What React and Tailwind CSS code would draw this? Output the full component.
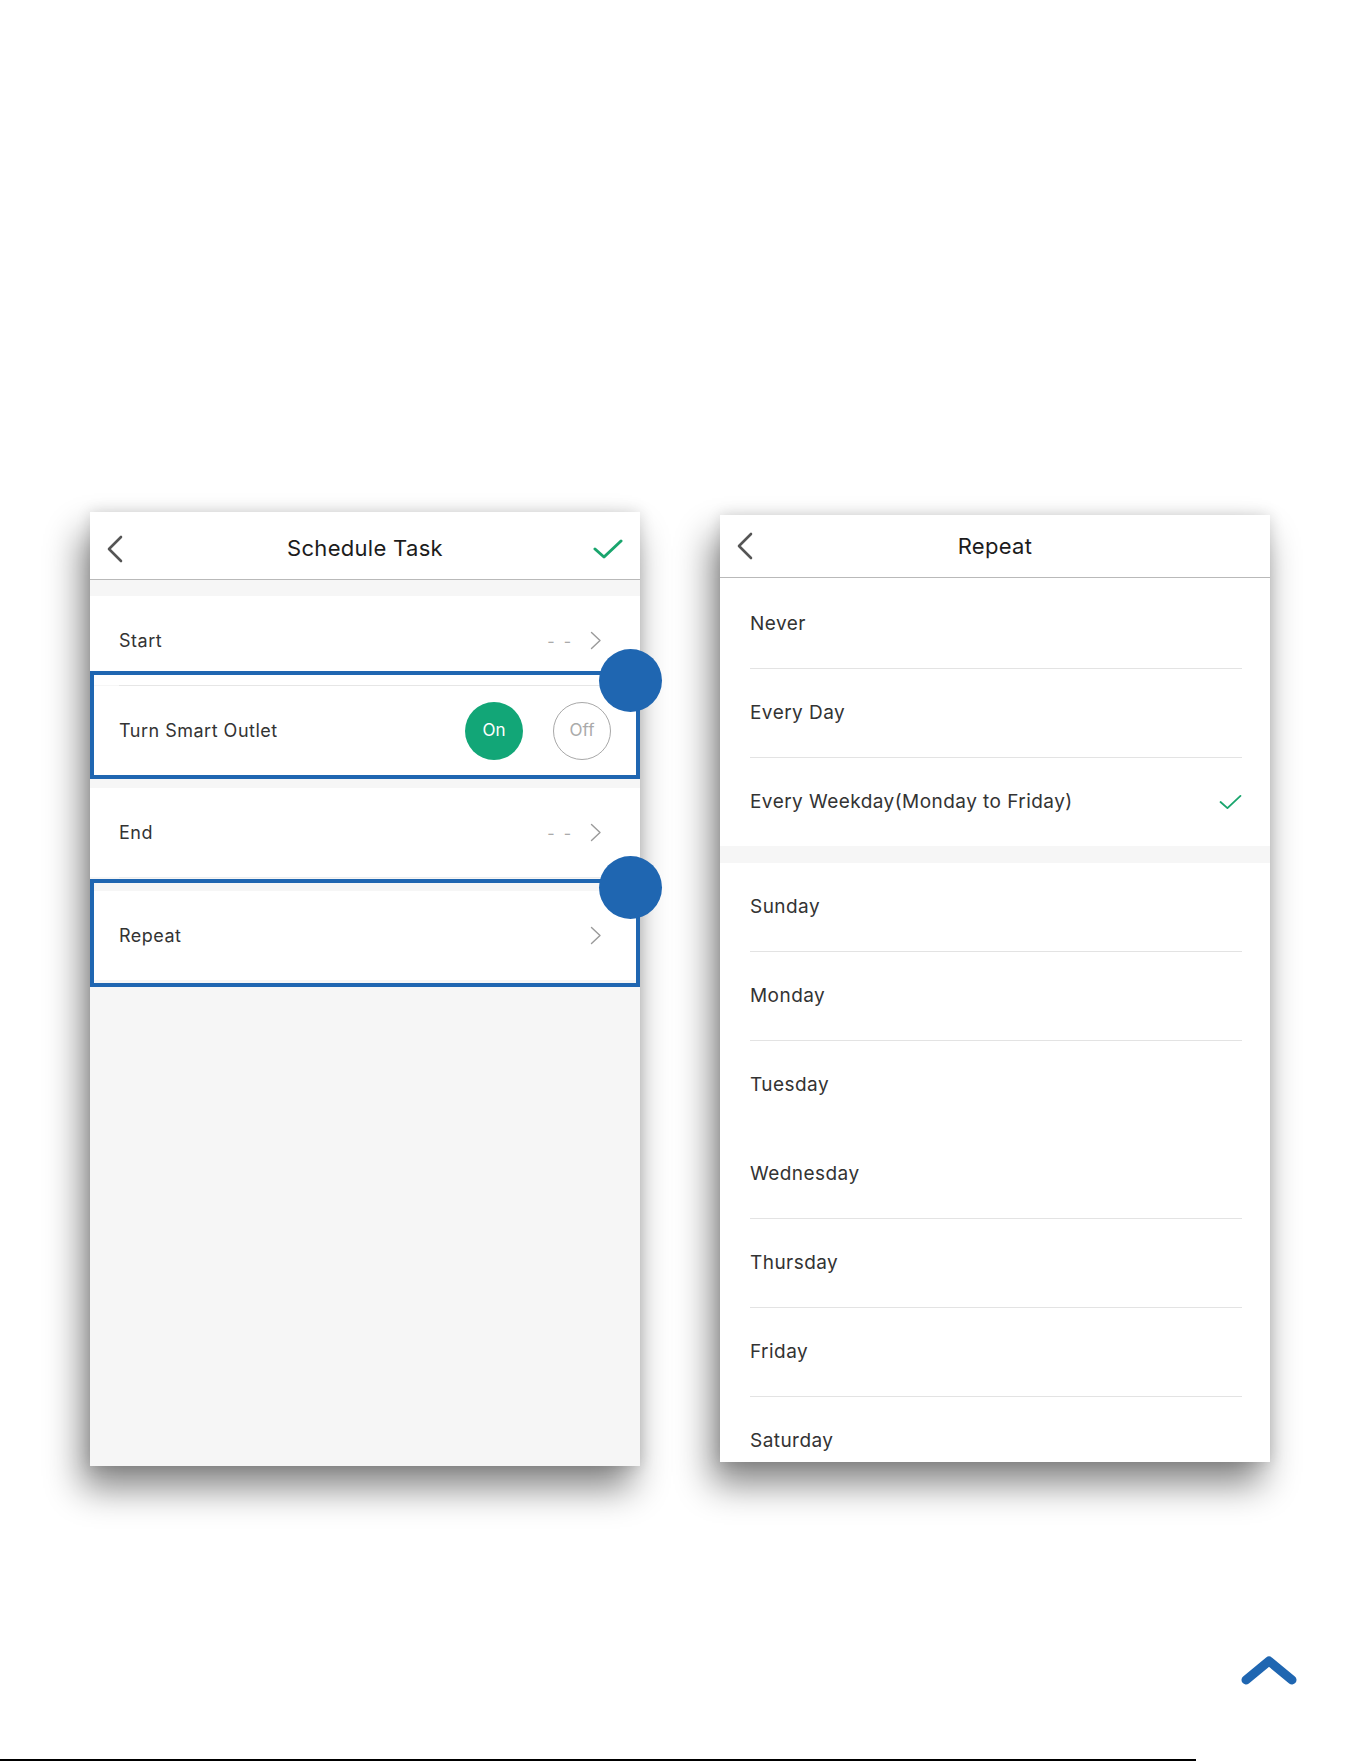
import React from 'react';

const BLUE = 'bg-[#1f66b1]';
const SHADOW = 'shadow-[-8px_22px_34px_rgba(0,0,0,0.48),0_0_14px_rgba(0,0,0,0.14)]';

const BackIcon = () => (
  <svg width="18" height="28" viewBox="0 0 18 28" fill="none">
    <path d="M15 2 L3 14 L15 26" stroke="#555" strokeWidth="2.6" strokeLinecap="round" strokeLinejoin="round" />
  </svg>
);

const CheckIcon = ({ w = 30, h = 20, sw = 3 }) => (
  <svg width={w} height={h} viewBox="0 0 30 20" fill="none">
    <path d="M2 10 L11 18 L28 2" stroke="#19a56d" strokeWidth={sw} strokeLinecap="round" strokeLinejoin="round" />
  </svg>
);

const ChevronRight = () => (
  <svg width="12" height="19" viewBox="0 0 12 19" fill="none">
    <path d="M1.5 1.5 L10 9.5 L1.5 17.5" stroke="#9a9a9a" strokeWidth="1.4" strokeLinecap="round" strokeLinejoin="round" />
  </svg>
);

// three-column nav bar so the title stays centred
const Header = ({ title, right, height }) => (
  <div className={`grid grid-cols-[70px_1fr_70px] items-center bg-white border-b border-[#b9b9b9] ${height}`}>
    <div className="pl-[16px] flex items-center">
      <BackIcon />
    </div>
    <span className="text-center text-[22px] tracking-[0.3px] text-[#1c1c1c]">{title}</span>
    <div className="pr-[17px] flex items-center justify-end">{right}</div>
  </div>
);

const NavRow = ({ label, value }) => (
  <div className="h-[89px] px-[29px] flex items-center justify-between bg-white">
    <span className="text-[18px] tracking-[0.5px] text-[#333]">{label}</span>
    <div className="flex items-center gap-[19px]">
      {value && <span className="text-[16px] text-[#aaa]">-&nbsp;&nbsp;-</span>}
      <div className="mr-[9px]"><ChevronRight /></div>
    </div>
  </div>
);

const Divider = ({ className = '' }) => <div className={`h-px bg-[#e6e6e6] ml-[29px] ${className}`} />;

const Marker = ({ top }) => (
  <div className={`absolute left-0 w-[550px] h-[108px] border-[4px] border-[#1f66b1] ${top}`} />
);

const ScheduleTask = () => (
  <div className={`relative w-[550px] h-[954px] bg-[#f6f6f6] ${SHADOW}`}>
    <Header title="Schedule Task" height="h-[68px] pt-[6px]" right={<CheckIcon />} />
    <div className="h-[16px]" />
    <NavRow label="Start" value />
    <Divider />
    <div className="h-[89px] pl-[29px] pr-[29px] flex items-center justify-between bg-white">
      <span className="text-[18px] tracking-[0.5px] text-[#333]">Turn Smart Outlet</span>
      <div className="flex items-center gap-[30px]">
        <div className="w-[58px] h-[58px] rounded-full bg-[#12a677] flex items-center justify-center text-white text-[17px]">On</div>
        <div className="w-[58px] h-[58px] rounded-full border-[1.5px] border-[#a8a8a8] bg-white flex items-center justify-center text-[#aaa] text-[17px]">Off</div>
      </div>
    </div>
    <div className="h-[13px]" />
    <NavRow label="End" value />
    <Divider className="bg-[#ececec]" />
    <div className="h-[13px]" />
    <NavRow label="Repeat" />

    {/* callouts */}
    <Marker top="top-[159px]" />
    <Marker top="top-[367px]" />
    <div className={`absolute left-[509px] top-[137px] w-[63px] h-[63px] rounded-full ${BLUE}`} />
    <div className={`absolute left-[509px] top-[344px] w-[63px] h-[63px] rounded-full ${BLUE}`} />
  </div>
);

const OptionRow = ({ label, checked, line = true, blankLine }) => (
  <>
    <div className="h-[88px] pl-[30px] pr-[28px] flex items-center justify-between bg-white">
      <span className="text-[19px] tracking-[0.45px] text-[#333]">{label}</span>
      {checked && <CheckIcon w={23} h={16} sw={2.4} />}
    </div>
    {line && <div className="h-px bg-[#e3e3e3] ml-[30px] mr-[28px]" />}
    {blankLine && <div className="h-px" />}
  </>
);

const RepeatScreen = () => (
  <div className={`w-[550px] h-[947px] overflow-hidden bg-white ${SHADOW}`}>
    <Header title="Repeat" height="h-[63px]" />
    <div className="h-[2px]" />
    <OptionRow label="Never" />
    <OptionRow label="Every Day" />
    <OptionRow label="Every Weekday(Monday to Friday)" checked line={false} />
    <div className="h-[17px] bg-[#f6f6f6]" />
    <OptionRow label="Sunday" />
    <OptionRow label="Monday" />
    <OptionRow label="Tuesday" line={false} blankLine />
    <OptionRow label="Wednesday" />
    <OptionRow label="Thursday" />
    <OptionRow label="Friday" />
    <OptionRow label="Saturday" line={false} />
  </div>
);

export default function App() {
  return (
    <div className="w-[1361px] h-[1761px] bg-white flex flex-col font-['Inter',sans-serif]">
      <div className="flex items-start gap-[80px] pl-[90px] pt-[512px]">
        <ScheduleTask />
        <div className="mt-[3px]">
          <RepeatScreen />
        </div>
      </div>
      <div className="flex justify-end pr-[64px] mt-[189px]">
        <svg width="56" height="31" viewBox="0 0 56 31" fill="none">
          <path d="M5 25 L28 6 L51 25" stroke="#1f66b1" strokeWidth="9" strokeLinecap="round" strokeLinejoin="round" />
        </svg>
      </div>
      <div className="mt-auto h-[2px] w-[1196px] bg-black" />
    </div>
  );
}
